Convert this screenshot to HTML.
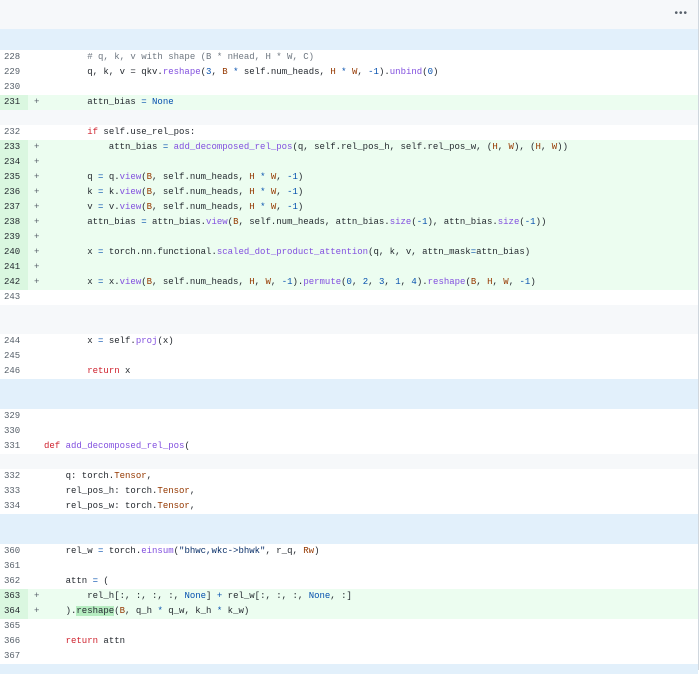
<!DOCTYPE html>
<html><head><meta charset="utf-8"><style>
*{margin:0;padding:0;box-sizing:border-box}
body{width:700px;height:670px;overflow:hidden;background:#fff;font-family:"Liberation Mono",monospace;font-size:9px;color:#24292f}
.wrap{position:absolute;left:0;top:0;width:699px;height:670px;border-right:1px solid #d0d7de}
.b{position:relative}
.hdr{height:29px;background:#f6f8fa}
.dots{position:absolute;right:10px;top:8px;color:#57606a;font-size:10px;letter-spacing:1px;font-family:"Liberation Sans",sans-serif}
.blue{background:#e2f0fb}
.gray{background:#f6f8fa}
.r{height:15px;line-height:15px;position:relative;white-space:pre}
.r .n{position:absolute;left:0;width:28px;padding-left:4px;color:#57606a;font-size:9px}
.r .p{position:absolute;left:34px;color:#57606a}
.r .c{position:absolute;left:44px}
.a{background:#ecfdf0}
.a .n{background:#daf7e0;color:#24292f}
.k{color:#cf222e}.f{color:#8250df}.v{color:#0550ae}.o{color:#953800}.cm{color:#6e7781}.s{color:#0a3069}
.hl{background:#b5ecc0}
</style></head><body><div class="wrap">
<div class="b hdr"><span class="dots">•••</span></div>
<div class="b blue" style="height:21px"></div>
<div class="r"><span class="n">228</span><span class="c">        <span class="cm"># q, k, v with shape (B * nHead, H * W, C)</span></span></div>
<div class="r"><span class="n">229</span><span class="c">        q, k, v = qkv.<span class="f">reshape</span>(<span class="v">3</span>, <span class="o">B</span> <span class="v">*</span> self.num_heads, <span class="o">H</span> <span class="v">*</span> <span class="o">W</span>, <span class="v">-1</span>).<span class="f">unbind</span>(<span class="v">0</span>)</span></div>
<div class="r"><span class="n">230</span></div>
<div class="r a"><span class="n">231</span><span class="p">+</span><span class="c">        attn_bias <span class="v">=</span> <span class="v">None</span></span></div>
<div class="b gray" style="height:15px"></div>
<div class="r"><span class="n">232</span><span class="c">        <span class="k">if</span> self.use_rel_pos:</span></div>
<div class="r a"><span class="n">233</span><span class="p">+</span><span class="c">            attn_bias <span class="v">=</span> <span class="f">add_decomposed_rel_pos</span>(q, self.rel_pos_h, self.rel_pos_w, (<span class="o">H</span>, <span class="o">W</span>), (<span class="o">H</span>, <span class="o">W</span>))</span></div>
<div class="r a"><span class="n">234</span><span class="p">+</span></div>
<div class="r a"><span class="n">235</span><span class="p">+</span><span class="c">        q <span class="v">=</span> q.<span class="f">view</span>(<span class="o">B</span>, self.num_heads, <span class="o">H</span> <span class="v">*</span> <span class="o">W</span>, <span class="v">-1</span>)</span></div>
<div class="r a"><span class="n">236</span><span class="p">+</span><span class="c">        k <span class="v">=</span> k.<span class="f">view</span>(<span class="o">B</span>, self.num_heads, <span class="o">H</span> <span class="v">*</span> <span class="o">W</span>, <span class="v">-1</span>)</span></div>
<div class="r a"><span class="n">237</span><span class="p">+</span><span class="c">        v <span class="v">=</span> v.<span class="f">view</span>(<span class="o">B</span>, self.num_heads, <span class="o">H</span> <span class="v">*</span> <span class="o">W</span>, <span class="v">-1</span>)</span></div>
<div class="r a"><span class="n">238</span><span class="p">+</span><span class="c">        attn_bias <span class="v">=</span> attn_bias.<span class="f">view</span>(<span class="o">B</span>, self.num_heads, attn_bias.<span class="f">size</span>(<span class="v">-1</span>), attn_bias.<span class="f">size</span>(<span class="v">-1</span>))</span></div>
<div class="r a"><span class="n">239</span><span class="p">+</span></div>
<div class="r a"><span class="n">240</span><span class="p">+</span><span class="c">        x <span class="v">=</span> torch.nn.functional.<span class="f">scaled_dot_product_attention</span>(q, k, v, attn_mask<span class="v">=</span>attn_bias)</span></div>
<div class="r a"><span class="n">241</span><span class="p">+</span></div>
<div class="r a"><span class="n">242</span><span class="p">+</span><span class="c">        x <span class="v">=</span> x.<span class="f">view</span>(<span class="o">B</span>, self.num_heads, <span class="o">H</span>, <span class="o">W</span>, <span class="v">-1</span>).<span class="f">permute</span>(<span class="v">0</span>, <span class="v">2</span>, <span class="v">3</span>, <span class="v">1</span>, <span class="v">4</span>).<span class="f">reshape</span>(<span class="o">B</span>, <span class="o">H</span>, <span class="o">W</span>, <span class="v">-1</span>)</span></div>
<div class="r"><span class="n">243</span></div>
<div class="b gray" style="height:29px"></div>
<div class="r"><span class="n">244</span><span class="c">        x <span class="v">=</span> self.<span class="f">proj</span>(x)</span></div>
<div class="r"><span class="n">245</span></div>
<div class="r"><span class="n">246</span><span class="c">        <span class="k">return</span> x</span></div>
<div class="b blue" style="height:30px"></div>
<div class="r"><span class="n">329</span></div>
<div class="r"><span class="n">330</span></div>
<div class="r"><span class="n">331</span><span class="c"><span class="k">def</span> <span class="f">add_decomposed_rel_pos</span>(</span></div>
<div class="b gray" style="height:15px"></div>
<div class="r"><span class="n">332</span><span class="c">    q: torch.<span class="o">Tensor</span>,</span></div>
<div class="r"><span class="n">333</span><span class="c">    rel_pos_h: torch.<span class="o">Tensor</span>,</span></div>
<div class="r"><span class="n">334</span><span class="c">    rel_pos_w: torch.<span class="o">Tensor</span>,</span></div>
<div class="b blue" style="height:30px"></div>
<div class="r"><span class="n">360</span><span class="c">    rel_w <span class="v">=</span> torch.<span class="f">einsum</span>(<span class="s">"bhwc,wkc-&gt;bhwk"</span>, r_q, <span class="o">Rw</span>)</span></div>
<div class="r"><span class="n">361</span></div>
<div class="r"><span class="n">362</span><span class="c">    attn <span class="v">=</span> (</span></div>
<div class="r a"><span class="n">363</span><span class="p">+</span><span class="c">        rel_h[:, :, :, :, <span class="v">None</span>] <span class="v">+</span> rel_w[:, :, :, <span class="v">None</span>, :]</span></div>
<div class="r a"><span class="n">364</span><span class="p">+</span><span class="c">    ).<span class="hl">reshape</span>(<span class="o">B</span>, q_h <span class="v">*</span> q_w, k_h <span class="v">*</span> k_w)</span></div>
<div class="r"><span class="n">365</span></div>
<div class="r"><span class="n">366</span><span class="c">    <span class="k">return</span> attn</span></div>
<div class="r"><span class="n">367</span></div>
<div class="b blue" style="height:10px"></div>
</div></body></html>
